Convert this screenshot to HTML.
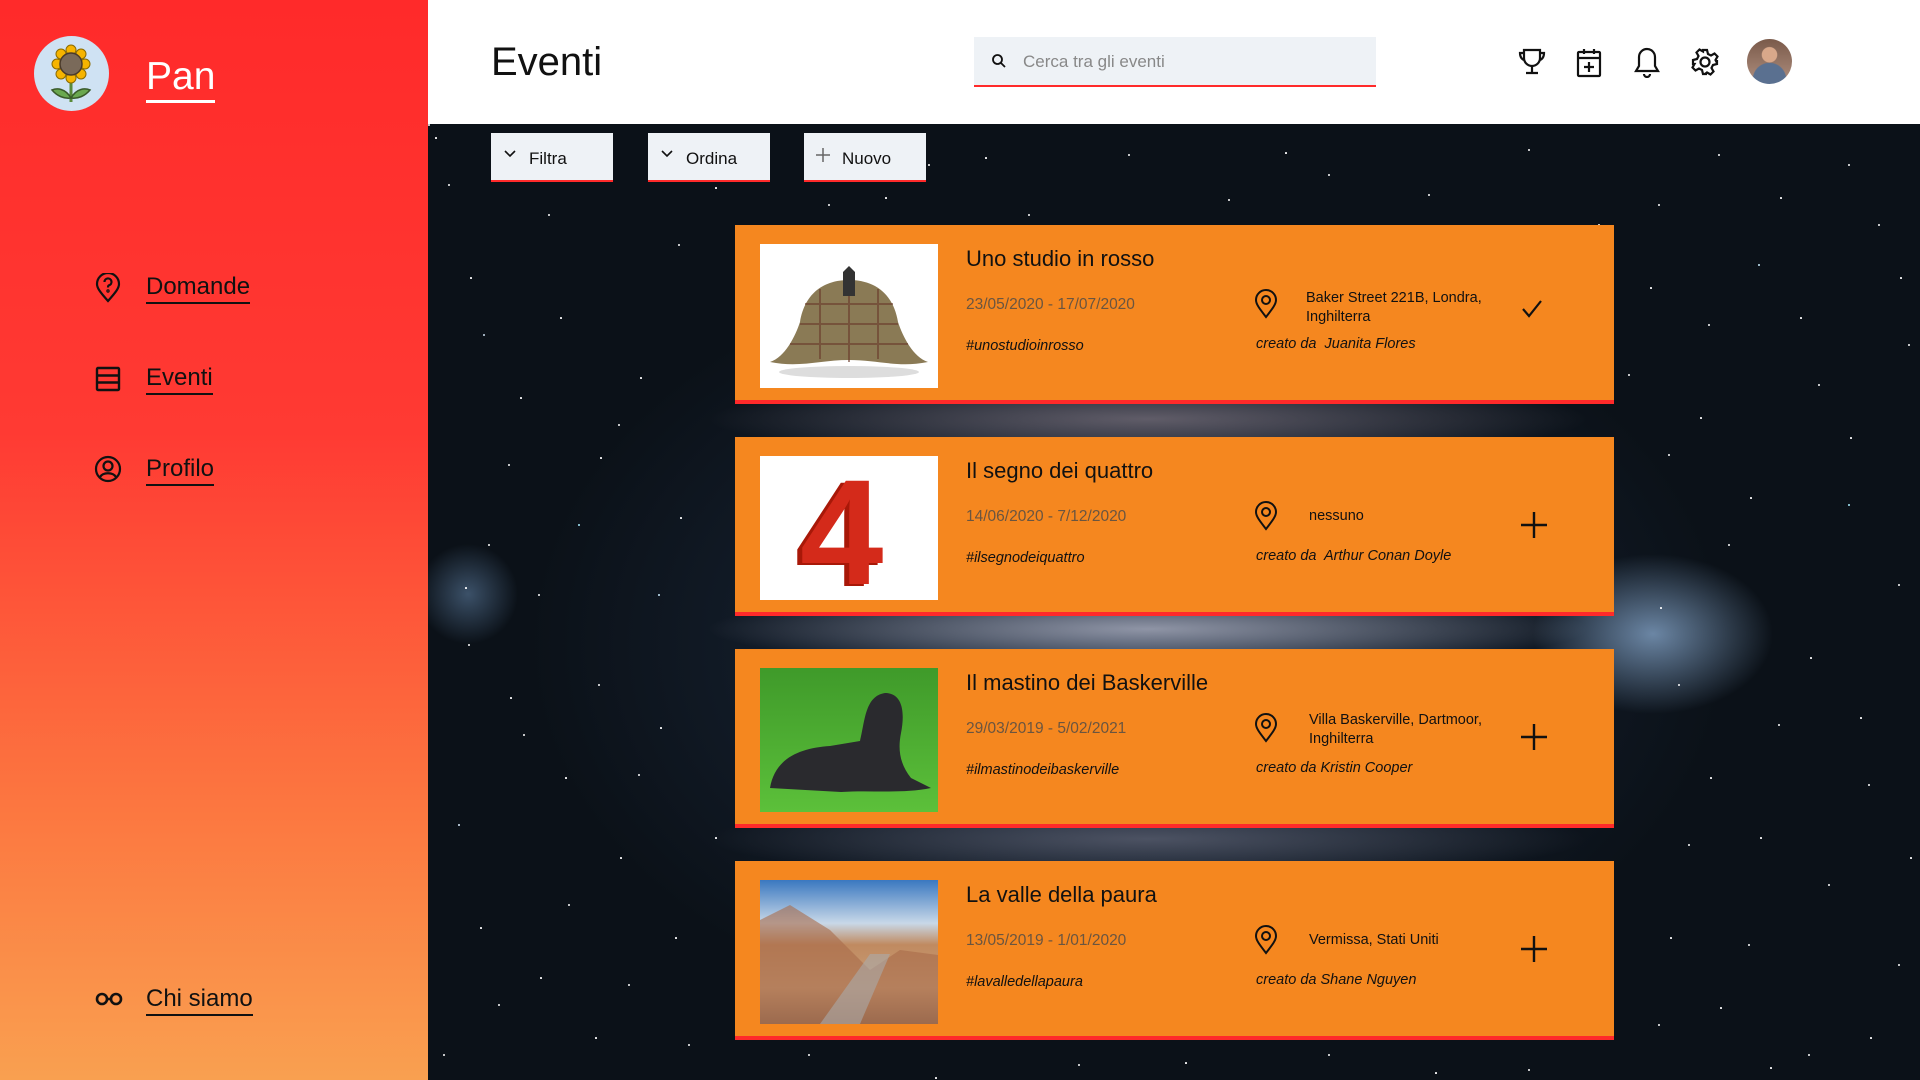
<!DOCTYPE html>
<html><head><meta charset="utf-8"><style>
*{margin:0;padding:0;box-sizing:border-box}
body{width:1920px;height:1080px;overflow:hidden;font-family:"Liberation Sans",sans-serif;position:relative;background:#fff}
.side{position:absolute;left:0;top:0;width:428px;height:1080px;background:linear-gradient(#ff2a2a 0%,#ff3a33 40%,#fc7740 75%,#f9a050 100%)}
.logo{position:absolute;left:34px;top:36px;width:75px;height:75px;border-radius:50%;background:#cfe2f3}
.pan{position:absolute;left:146px;top:54px;font-size:39px;color:#fff;border-bottom:3px solid #fff;line-height:46px}
.nav{position:absolute;left:146px;font-size:24px;color:#111;border-bottom:2px solid #111;line-height:30px}
.nicon{position:absolute;left:94px}
.main{position:absolute;left:428px;top:124px;width:1492px;height:956px;overflow:hidden;
background:
radial-gradient(ellipse 120px 80px at 1225px 510px,rgba(170,210,255,.6),transparent),
radial-gradient(ellipse 50px 50px at 40px 470px,rgba(150,200,255,.35),transparent),
radial-gradient(ellipse 440px 40px at 720px 505px,rgba(220,220,235,.6),transparent),
radial-gradient(ellipse 440px 40px at 720px 295px,rgba(190,170,180,.45),transparent),
radial-gradient(ellipse 440px 40px at 720px 715px,rgba(160,160,180,.4),transparent),
radial-gradient(ellipse 600px 400px at 700px 520px,rgba(40,60,90,.6),transparent),
#0b1118}
.stars{position:absolute;left:0;top:0;width:2px;height:2px;border-radius:50%;background:#fff}
.hdr{position:absolute;left:491px;top:40px;font-size:40px;color:#111}
.search{position:absolute;left:974px;top:37px;width:402px;height:50px;background:#eef2f6;border-bottom:2px solid #ff2a2a}
.search span{position:absolute;left:49px;top:15px;font-size:17px;color:#888}
.btn{position:absolute;top:133px;width:122px;height:49px;background:#eef2f6;border-bottom:2px solid #ff2a2a;font-size:17px;color:#111}
.btn span{position:absolute;left:38px;top:16px}
.card{position:absolute;left:735px;width:879px;height:179px;background:#f5871f;border-bottom:4px solid #ff2a2a}
.img{position:absolute;left:25px;top:19px;width:178px;height:144px;overflow:hidden;background:#fff}
.t{position:absolute;left:231px;top:21px;font-size:22px;color:#111}
.d{position:absolute;left:231px;top:71px;font-size:15.5px;color:#6a5540}
.h{position:absolute;left:231px;top:113px;font-size:14.5px;font-style:italic;color:#111}
.pin{position:absolute;left:519px;top:64px}
.loc{position:absolute;left:571px;top:64px;font-size:14.5px;color:#111;line-height:19px;width:210px}
.by{position:absolute;left:521px;top:111px;font-size:14.5px;font-style:italic;color:#111}
.act{position:absolute;left:785px;top:74px}
</style></head><body>
<div class="side">
 <div class="logo"><svg width="75" height="75" viewBox="0 0 75 75"><path d="M37 40V66" stroke="#5a8a3a" stroke-width="3"/><path d="M37 62c-6-10-14-10-19-8 5 6 12 9 19 8zM37 62c6-10 14-10 19-8-5 6-12 9-19 8z" fill="#6aa84f" stroke="#3a5a2a" stroke-width="1.5"/><g fill="#f6b400" stroke="#8a6a00" stroke-width="1"><circle cx="37" cy="14" r="5"/><circle cx="37" cy="42" r="5"/><circle cx="23" cy="28" r="5"/><circle cx="51" cy="28" r="5"/><circle cx="27" cy="18" r="5"/><circle cx="47" cy="18" r="5"/><circle cx="27" cy="38" r="5"/><circle cx="47" cy="38" r="5"/></g><circle cx="37" cy="28" r="11" fill="#7a6a5a" stroke="#4a3a2a" stroke-width="1.5"/></svg></div>
 <div class="pan">Pan</div>
 <svg class="nicon" style="top:273px" width="28" height="30" viewBox="0 0 28 30" fill="none" stroke="#111" stroke-width="2.2"><path d="M14 28C6 19 3 15 3 11a11 11 0 0 1 22 0c0 4-3 8-11 17z"/><path d="M10.5 9a3.5 3.5 0 1 1 4.5 3.3c-1 .4-1 1-1 2.2"/><circle cx="14" cy="18" r=".6"/></svg>
 <div class="nav" style="top:272px">Domande</div>
 <svg class="nicon" style="top:365px" width="28" height="28" viewBox="0 0 28 28" fill="none" stroke="#111" stroke-width="2.4"><rect x="3" y="3" width="22" height="22" rx="1"/><path d="M3 10.5H25M3 17.5H25"/></svg>
 <div class="nav" style="top:363px">Eventi</div>
 <svg class="nicon" style="top:455px" width="28" height="28" viewBox="0 0 28 28" fill="none" stroke="#111" stroke-width="2.2"><circle cx="14" cy="14" r="12"/><circle cx="14" cy="11" r="4.5"/><path d="M6 22c3-5 13-5 16 0"/></svg>
 <div class="nav" style="top:454px">Profilo</div>
 <svg class="nicon" style="top:989px" width="30" height="20" viewBox="0 0 30 20" fill="none" stroke="#111" stroke-width="2.6"><circle cx="8" cy="10" r="5"/><circle cx="22" cy="10" r="5"/><path d="M13 10h4"/></svg>
 <div class="nav" style="top:984px">Chi siamo</div>
</div>
<div class="hdr">Eventi</div>
<div class="search"><svg style="position:absolute;left:17px;top:16px" width="16" height="16" viewBox="0 0 16 16" fill="none" stroke="#111" stroke-width="1.8"><circle cx="6.5" cy="6.5" r="4.5"/><path d="M10 10l4 4"/></svg><span>Cerca tra gli eventi</span></div>
<svg style="position:absolute;left:1517px;top:47px" width="30" height="30" viewBox="0 0 30 30" fill="none" stroke="#111" stroke-width="2.2"><path d="M7 3h16v8a8 8 0 0 1-16 0zM15 19v6M9 26h12M7 6H3c0 4 2 7 5 7M23 6h4c0 4-2 7-5 7"/></svg>
<svg style="position:absolute;left:1575px;top:47px" width="28" height="32" viewBox="0 0 28 32" fill="none" stroke="#111" stroke-width="2.2"><rect x="3" y="5" width="22" height="24" rx="1"/><path d="M3 11h22M9 2v5M19 2v5M14 15v10M9 20h10"/></svg>
<svg style="position:absolute;left:1633px;top:46px" width="28" height="32" viewBox="0 0 28 32" fill="none" stroke="#111" stroke-width="2.2"><path d="M14 3a8 8 0 0 0-8 8v9l-3 5h22l-3-5v-9a8 8 0 0 0-8-8zM11 28a3 3 0 0 0 6 0"/></svg>
<svg style="position:absolute;left:1690px;top:47px" width="30" height="30" viewBox="0 0 30 30" fill="none" stroke="#111" stroke-width="2.2"><circle cx="15" cy="15" r="4.5"/><path d="M13 3h4l1 4 3 1.5 3.5-2 3 3-2 3.5L27 16v-3 4l-4 1-1.5 3 2 3.5-3 3-3.5-2L15 27h2-4l-1-4-3-1.5-3.5 2-3-3 2-3.5L3 17v-4l4-1 1.5-3-2-3.5 3-3 3.5 2z"/></svg>
<div style="position:absolute;left:1747px;top:39px;width:45px;height:45px;border-radius:50%;background:radial-gradient(circle at 50% 35%,#d9a88a 0 20%,transparent 22%),radial-gradient(circle at 50% 90%,#5a7090 0 35%,transparent 37%),linear-gradient(#7a5a4a,#b09080)"></div>
<div class="main">
 <div class="stars" id="s"></div>
 <div class="stars" id="s2" style="left:7px;top:13px;width:1.5px;height:1.5px"></div>
 <div class="btn" style="left:63px;top:9px"><svg style="position:absolute;left:13px;top:16px" width="12" height="10" viewBox="0 0 12 10" fill="none" stroke="#111" stroke-width="1.6"><path d="M1 2l5 5 5-5"/></svg><span>Filtra</span></div>
 <div class="btn" style="left:220px;top:9px"><svg style="position:absolute;left:13px;top:16px" width="12" height="10" viewBox="0 0 12 10" fill="none" stroke="#111" stroke-width="1.6"><path d="M1 2l5 5 5-5"/></svg><span>Ordina</span></div>
 <div class="btn" style="left:376px;top:9px"><svg style="position:absolute;left:11px;top:14px" width="16" height="16" viewBox="0 0 16 16" stroke="#666" stroke-width="1.5"><path d="M8 1v14M1 8h14"/></svg><span>Nuovo</span></div>
</div>
<div class="card" style="top:225px">
 <div class="img"><svg width="178" height="144" viewBox="0 0 178 144"><ellipse cx="89" cy="128" rx="70" ry="6" fill="#ddd"/><path d="M10 118c15-5 25-25 30-40 5-30 25-42 49-42s44 12 49 42c5 15 15 35 30 40-30 6-50-2-79-2s-49 8-79 2z" fill="#8a7a55"/><path d="M40 80h98M45 60h88M30 100h118M60 45v70M89 38v80M118 45v70" stroke="#6a3a2a" stroke-width="2" opacity=".6"/><path d="M83 28l6-6 6 6v24h-12z" fill="#333"/></svg></div>
 <div class="t">Uno studio in rosso</div><div class="d">23/05/2020 - 17/07/2020</div><div class="h">#unostudioinrosso</div>
 <svg class="pin" width="24" height="30" viewBox="0 0 24 30" fill="none" stroke="#111" stroke-width="2"><path d="M12 28C5 19 2 15 2 11a10 10 0 0 1 20 0c0 4-3 8-10 17z"/><circle cx="12" cy="11" r="4"/></svg>
 <div class="loc" style="top:64px">Baker Street 221B, Londra, Inghilterra</div><div class="by">creato da&nbsp; Juanita Flores</div>
 <svg class="act" width="24" height="20" viewBox="0 0 24 20" fill="none" stroke="#111" stroke-width="2.2"><path d="M3 10l6 7L21 2"/></svg>
</div>
<div class="card" style="top:437px">
 <div class="img"><div style="position:absolute;left:40px;top:-10px;font-size:150px;font-weight:bold;color:#d42a1a;text-shadow:-5px 2px #a81808">4</div></div>
 <div class="t">Il segno dei quattro</div><div class="d">14/06/2020 - 7/12/2020</div><div class="h">#ilsegnodeiquattro</div>
 <svg class="pin" width="24" height="30" viewBox="0 0 24 30" fill="none" stroke="#111" stroke-width="2"><path d="M12 28C5 19 2 15 2 11a10 10 0 0 1 20 0c0 4-3 8-10 17z"/><circle cx="12" cy="11" r="4"/></svg>
 <div class="loc" style="top:70px;left:574px">nessuno</div><div class="by">creato da&nbsp; Arthur Conan Doyle</div>
 <svg class="act" width="28" height="28" viewBox="0 0 28 28" stroke="#111" stroke-width="2.4"><path d="M14 1v26M1 14h26"/></svg>
</div>
<div class="card" style="top:649px">
 <div class="img" style="background:linear-gradient(#3f9a2a,#5cc03a)"><svg width="178" height="144" viewBox="0 0 178 144"><path d="M10 120c5-30 30-40 60-42l30-5c5-20 5-45 25-48 18 0 20 20 16 40-3 15-2 30 10 45l20 10c-30 6-60 2-90 4z" fill="#2a2a2e"/></svg></div>
 <div class="t">Il mastino dei Baskerville</div><div class="d">29/03/2019 - 5/02/2021</div><div class="h">#ilmastinodeibaskerville</div>
 <svg class="pin" width="24" height="30" viewBox="0 0 24 30" fill="none" stroke="#111" stroke-width="2"><path d="M12 28C5 19 2 15 2 11a10 10 0 0 1 20 0c0 4-3 8-10 17z"/><circle cx="12" cy="11" r="4"/></svg>
 <div class="loc" style="top:62px;left:574px;width:220px">Villa Baskerville, Dartmoor, Inghilterra</div><div class="by">creato da Kristin Cooper</div>
 <svg class="act" width="28" height="28" viewBox="0 0 28 28" stroke="#111" stroke-width="2.4"><path d="M14 1v26M1 14h26"/></svg>
</div>
<div class="card" style="top:861px">
 <div class="img" style="background:linear-gradient(#3a78c0,#c8d8e8 30%,#c08a60 45%,#c9a07a 75%,#8a6a55)"><svg width="178" height="144" viewBox="0 0 178 144"><path d="M0 40l30-15 40 25 40 40 30-20 38 5v70H0z" fill="#a86a4a" opacity=".6"/><path d="M60 144l50-70 20 0-30 70z" fill="#aaa" opacity=".6"/></svg></div>
 <div class="t">La valle della paura</div><div class="d">13/05/2019 - 1/01/2020</div><div class="h">#lavalledellapaura</div>
 <svg class="pin" width="24" height="30" viewBox="0 0 24 30" fill="none" stroke="#111" stroke-width="2"><path d="M12 28C5 19 2 15 2 11a10 10 0 0 1 20 0c0 4-3 8-10 17z"/><circle cx="12" cy="11" r="4"/></svg>
 <div class="loc" style="top:70px;left:574px">Vermissa, Stati Uniti</div><div class="by">creato da Shane Nguyen</div>
 <svg class="act" width="28" height="28" viewBox="0 0 28 28" stroke="#111" stroke-width="2.4"><path d="M14 1v26M1 14h26"/></svg>
</div>
<style>
#s{box-shadow:20px 60px #fff,55px 210px #cde,80px 340px #fff,120px 90px #fff,150px 400px #aef,40px 520px #fff,95px 610px #fff,30px 700px #def,140px 780px #fff,70px 880px #fff,190px 300px #fff,210px 650px #fff,230px 470px #cef,250px 120px #fff,170px 560px #fff,110px 470px #fff,60px 420px #fff,200px 860px #fff,260px 920px #fff,15px 930px #fff,1230px 80px #fff,1280px 200px #fff,1330px 140px #cef,1390px 260px #fff,1450px 100px #fff,1240px 330px #fff,1300px 420px #fff,1420px 380px #aef,1470px 460px #fff,1250px 560px #fff,1350px 600px #fff,1440px 660px #fff,1260px 720px #fff,1400px 760px #fff,1320px 820px #fff,1470px 840px #fff,1230px 900px #fff,1380px 930px #fff,1480px 220px #fff,1200px 250px #fff,1290px 30px #fff,1420px 40px #fff,300px 20px #fff,500px 40px #fff,700px 30px #fff,900px 50px #fff,1100px 25px #fff,1000px 70px #fff,600px 90px #fff,800px 75px #fff,400px 80px #fff,1170px 100px #fff,380px 930px #fff,650px 940px #fff,900px 930px #fff,1100px 945px #fff}
#s2{box-shadow:35px 140px #fff,85px 260px #fff,125px 180px #fff,165px 320px #fff,205px 240px #fff,245px 380px #fff,30px 450px #fff,75px 560px #fff,130px 640px #fff,185px 720px #fff,225px 590px #fff,45px 790px #fff,105px 840px #fff,160px 900px #fff,240px 800px #fff,280px 50px #fff,280px 700px #fff,1215px 150px #fff,1265px 280px #fff,1315px 360px #fff,1365px 180px #fff,1415px 300px #fff,1465px 140px #fff,1225px 470px #fff,1275px 640px #fff,1325px 700px #fff,1375px 520px #fff,1425px 580px #fff,1475px 720px #fff,1235px 800px #fff,1285px 870px #fff,1335px 930px #fff,1435px 900px #fff,1485px 560px #fff,1345px 60px #fff,450px 60px #fff,550px 20px #fff,750px 95px #fff,850px 15px #fff,1050px 95px #fff,350px 110px #fff,500px 940px #fff,750px 925px #fff,1000px 935px #fff}
</style>
</body></html>
